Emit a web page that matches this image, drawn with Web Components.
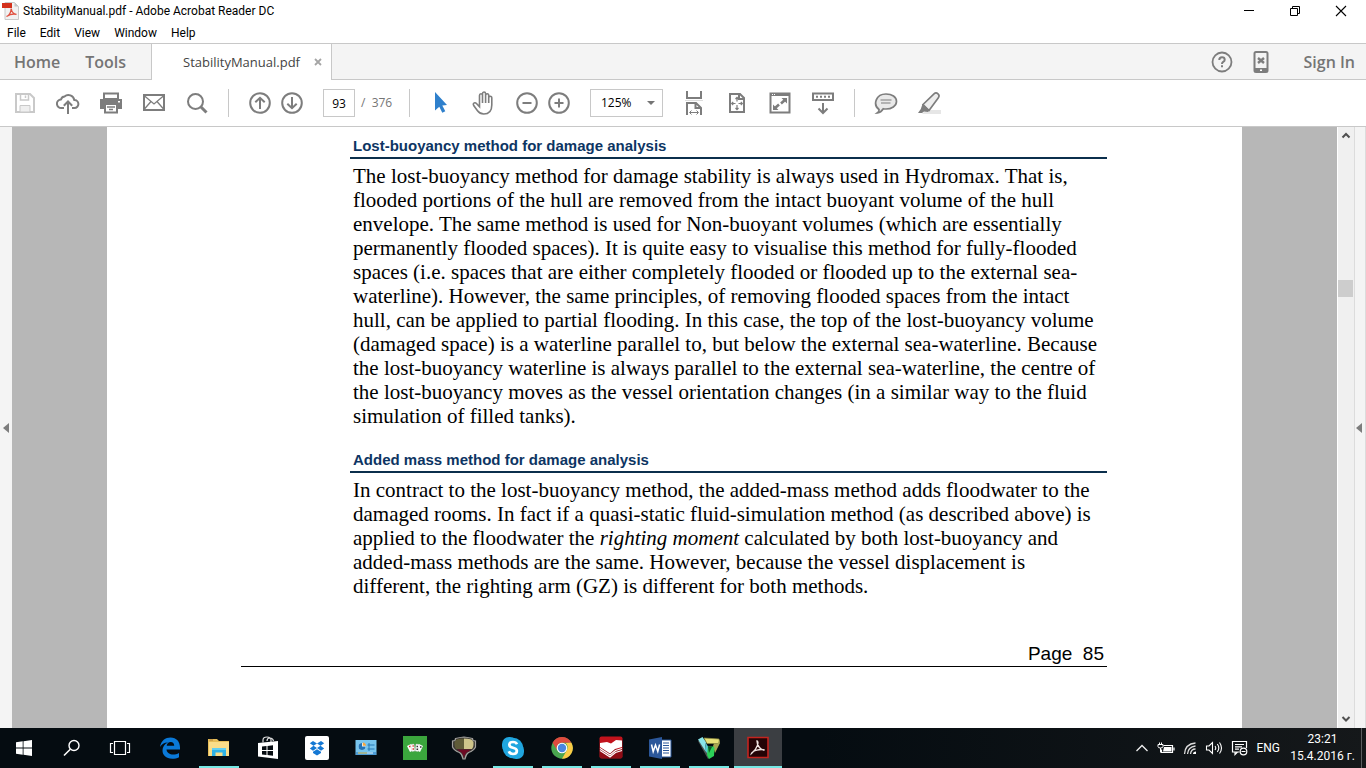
<!DOCTYPE html>
<html lang="en">
<head>
<meta charset="utf-8">
<title>StabilityManual.pdf - Adobe Acrobat Reader DC</title>
<style>
html, body { margin: 0; height: 100%; }
body { font-family: "Noto Sans", "Open Sans", sans-serif; background: #fff; color: #000; overflow: hidden; }
</style>
</head>
<body>
<reader-app></reader-app>

<script>
const g = 'fill="none" stroke="#7d7d7d" stroke-width="2"';
const ICONS = {
  pdf: [18, 18, `<path d="M3 .5h9.500l4 4v13H3z" fill="#f1f1f1" stroke="#c9c9c9"/><path d="M12.500.5l4 4h-4z" fill="#c4c4c4"/><path d="M0 1h10v5H0z" fill="#d3311c"/><path d="M4.500 14.500c2.500-1 4.500-4.500 4.700-8 .5 3.500 2 5.500 5.300 5.800-3.500-.8-7 .2-10 2.200z" fill="none" stroke="#e0503f" stroke-width="1.300"/>`],
  min: [12, 12, `<path d="M1 5.500h10" stroke="#000"/>`],
  restore: [12, 12, `<path d="M1.500 3.500h7v7h-7zM3.500 3.500v-2h7v7h-2" fill="none" stroke="#000"/>`],
  close: [12, 12, `<path d="M1 1l10 10M11 1L1 11" stroke="#000" stroke-width="1.100"/>`],
  tabclose: [9, 9, `<path d="M1 1l6 6M7 1L1 7" stroke="#a5a5a5" stroke-width="1.800"/>`],
  help: [22, 22, `<circle cx="11" cy="11" r="9.500" fill="none" stroke="#7d7d7d" stroke-width="1.800"/><path d="M8.300 9q0-2.700 2.700-2.700T13.700 8.700q0 1.300-1.500 2.200-1.200.8-1.200 2" fill="none" stroke="#7d7d7d" stroke-width="2"/><path d="M10 14.300h2v2h-2z" fill="#7d7d7d"/>`],
  phone: [16, 22, `<rect x="1.500" y="1" width="13" height="20" rx="1.500" fill="#f4f4f4" stroke="#7d7d7d" stroke-width="2"/><path d="M1 17h14v4H1z" fill="#7d7d7d"/><path d="M7 18.500h2v1.500H7z" fill="#fff"/><path d="M5 7l6 5M11 7l-6 5" stroke="#7d7d7d" stroke-width="2.400"/>`],
  save: [22, 22, `<path d="M2 2h14l4 4v14H2z" fill="none" stroke="#c9c9c9" stroke-width="2"/><path d="M6 13.500h10V20H6z" fill="#efefef" stroke="#c9c9c9"/><path d="M6.500 2v6h8V2" fill="none" stroke="#c9c9c9" stroke-width="1.500"/><path d="M11.500 3.500V6" stroke="#c9c9c9" stroke-width="1.500"/>`],
  cloud: [24, 24, `<path d="M8 17H5.500a4.300 4.300 0 0 1-.5-8.600A4 4 0 0 1 8.500 5.500 6 6 0 0 1 18.300 9 4 4 0 0 1 18.500 17H16" ${g}/><path d="M12 23V11M7.800 14.800L12 10.500l4.200 4.300" ${g}/>`],
  print: [24, 24, `<path d="M5 2.500h14V8H5z" fill="none" stroke="#7d7d7d" stroke-width="2"/><path d="M1 8h22v10H1z" fill="#7d7d7d"/><path d="M6 13h12v8.500H6z" fill="#fff" stroke="#7d7d7d" stroke-width="2"/><path d="M8 16h8M10 18.500h4" stroke="#7d7d7d" stroke-width="1.300"/><path d="M19 10h2v1.500h-2z" fill="#fff"/>`],
  mail: [24, 20, `<path d="M2 2h20v15H2z" ${g}/><path d="M2 2.500l10 8.500 10-8.500M2 16.500l7-8M22 16.500l-7-8" fill="none" stroke="#7d7d7d" stroke-width="1.300"/>`],
  search: [22, 22, `<circle cx="9.500" cy="9.500" r="7.500" ${g}/><path d="M15 15l5.500 5.500" stroke="#7d7d7d" stroke-width="3"/>`],
  up: [24, 24, `<circle cx="12" cy="12" r="9.800" ${g}/><path d="M12 18V7M7.300 11.300L12 6.800l4.700 4.500" ${g}/>`],
  down: [24, 24, `<circle cx="12" cy="12" r="9.800" ${g}/><path d="M12 6v11M7.300 12.700l4.700 4.500 4.700-4.500" ${g}/>`],
  cursor: [12, 22, `<path d="M0 0v18.500l4.300-3.800 3 6 3-1.500-3-5.700L12 13z" fill="#2f80cc"/>`],
  hand: [26, 26, `<path d="M8.500 14V5.500q0-1.700 1.500-1.700t1.500 1.700V3.700Q11.500 2 13 2t1.600 1.700v1.600q.2-1.500 1.600-1.500 1.500 0 1.500 1.800v2q.3-1.300 1.600-1.300 1.500 0 1.500 1.900V15q0 9-8 9-4 0-6.300-3.200L2.700 15.500q-1-1.900.5-2.600 1.300-.5 2.500.8l2.800 3V12M11.500 5.500V13M14.600 5v8M17.700 7v6" fill="none" stroke="#7d7d7d" stroke-width="1.600"/>`],
  minus: [24, 24, `<circle cx="12" cy="12" r="9.800" ${g}/><path d="M7.500 12h9" ${g}/>`],
  plus: [24, 24, `<circle cx="12" cy="12" r="9.800" ${g}/><path d="M7.500 12h9M12 7.500v9" ${g}/>`],
  fitwidth: [18, 24, `<path d="M2 0v7h14V0" ${g}/><path d="M0 9.500h18" stroke="#ddd"/><path d="M2 24V12h9l5 5v7M10.500 12.500V17H16" fill="none" stroke="#7d7d7d" stroke-width="2"/><path d="M5 21.500h8M6.500 19.500l-2 2 2 2M11.500 19.500l2 2-2 2" fill="none" stroke="#7d7d7d"/>`],
  fitpage: [18, 22, `<path d="M2 2h10l4 4v14H2zM11 2v5h5" fill="none" stroke="#7d7d7d" stroke-width="2"/><path d="M9 5.500v4M9 13v4.500M3.500 11.500h4M10.500 11.500h4M7.500 7L9 5.300 10.500 7M7.500 16L9 17.700l1.500-1.700M5.200 10l-1.500 1.500L5.200 13M12.800 10l1.500 1.500-1.500 1.500" fill="none" stroke="#7d7d7d" stroke-width="1.200"/>`],
  full: [22, 22, `<path d="M1.500 1.500h19v19h-19z" fill="none" stroke="#7d7d7d" stroke-width="2"/><path d="M1 1h20v3H1z" fill="#7d7d7d"/><path d="M3 2.500h1M5 2.500h1" stroke="#fff"/><path d="M12.500 6H18v5.500zM4 12.500V18h5.500z" fill="#7d7d7d"/><path d="M16.500 7.500L12 11.500M5.500 16.500l4.500-4" stroke="#7d7d7d" stroke-width="2.600"/>`],
  keyboard: [24, 24, `<path d="M2 2.500h20V9H2z" ${g}/><path d="M5 5.800h14" stroke="#7d7d7d" stroke-width="2" stroke-dasharray="2 2"/><path d="M12 12v10M7.500 17.500L12 22l4.500-4.500" ${g}/>`],
  comment: [24, 24, `<path d="M5 18.500C-1.500 13.500 2 3 12 3c6 0 10.500 3 10.500 7.500S17.500 18 12 18c-1 0-2-.1-2.700-.3Q7 21.500 3.500 21.800 5.300 20.500 5 18.500z" fill="#e9e9e9" stroke="#7d7d7d" stroke-width="1.700"/><path d="M6.500 9h11M7 12h9.500" stroke="#7d7d7d" stroke-width="1.200"/>`],
  marker: [24, 24, `<path d="M9 19h15v4H5z" fill="#e6e6e6"/><path d="M6 13.500L17 2.800q2-1.800 4 0t.2 4.200L12 19.500z" fill="#eee" stroke="#7d7d7d" stroke-width="1.700"/><path d="M5.500 13l7 6-1.500 2-4-.5L5 22H1l2.800-4z" fill="#7d7d7d"/>`],
  left: [6, 10, `<path d="M6 0v10L0 5z" fill="#7d7d7d"/>`],
  chup: [10, 8, `<path d="M1.500 5.500L5 2l3.500 3.500" fill="none" stroke="#505050" stroke-width="2"/>`],
  chdown: [10, 8, `<path d="M1.500 2L5 5.500 8.500 2" fill="none" stroke="#505050" stroke-width="2"/>`],
  win: [16, 16, `<path d="M0 2.300L6.700 1.300v6.200H0zM7.500 1.200L16 0v7.500H7.500zM0 8.400h6.700v6.300L0 13.700zM7.500 8.400H16V16l-8.500-1.200z" fill="#fff"/>`],
  tsearch: [18, 18, `<circle cx="11" cy="6.500" r="5" fill="none" stroke="#fff" stroke-width="1.400"/><path d="M7.300 10.200L1 16.500" stroke="#fff" stroke-width="1.600"/>`],
  taskview: [22, 16, `<path d="M5.500 1.500h11v13h-11zM4 3.500H1.500v9H4M18 3.500h2.500v9H18" fill="none" stroke="#fff" stroke-width="1.200"/>`],
  edge: [22, 22, `<path d="M1 10C2 3.500 6.500.5 11.500.5 17.500.5 21 4.800 21 10.500v2H7.500c.3 3.500 3.500 5 6.500 5 2.200 0 4.200-.6 6-1.600v4.300c-2 1-4.300 1.500-6.800 1.500C7 21.700 3.500 18 3.500 13.500c0-3.700 2-6.500 5.500-8C5 5.500 2.500 7.500 1 10zM7.700 8.800h7.500c0-2.300-1.300-3.700-3.500-3.700-2.200 0-3.700 1.500-4 3.700z" fill="#0a79d8"/>`],
  folder: [22, 20, `<path d="M0 1h9l2 2h10v15H0z" fill="#e6bd59"/><path d="M1 4h20v14H1z" fill="#fadd8a"/><path d="M1.500 2H5" stroke="#b5813d"/><path d="M4 18v-8h14v8h-3.500v-3.500h-7V18z" fill="#2fb3e6"/><path d="M4 10h14v2H4z" fill="#62cff2"/>`],
  store: [22, 24, `<path d="M1 7l20-2v18L1 20.500z" fill="#fff"/><path d="M6 6.500V4q0-3 4-3t4 3v2M10 5q0-3 3-3t3.500 3" fill="none" stroke="#ddd" stroke-width="1.200"/><path d="M5 10.500l4.500-.5v4H5zM10.500 9.900l5.500-.6V14h-5.500zM5 15h4.500v4L5 18.500zM10.500 15H16v4.800l-5.500-.7z" fill="#060c11"/>`],
  dropbox: [24, 24, `<rect width="24" height="24" rx="2" fill="#fff"/><path d="M8 5L4.800 7.300 8.500 9.800 12 7.500zM16 5l3.200 2.300-3.700 2.500L12 7.500zM8.500 9.800L4.800 12.500 8 14.800l4-2.700zM15.500 9.800l3.700 2.700-3.200 2.300-4-2.700zM12 13.200l-4 2.600v1.200l4 2.500 4-2.500v-1.200z" fill="#1478d4"/>`],
  panel: [22, 18, `<rect x=".5" y="1" width="21" height="15" fill="#78c5ee"/><path d="M1 13h20v3H1z" fill="#4f9dd6"/><circle cx="7" cy="7.500" r="3.500" fill="#eef8ff"/><path d="M7 7.500V4a3.500 3.500 0 0 0 0 7 3.500 3.500 0 0 0 3.500-3.500z" fill="#2374b7"/><path d="M7.800 6.800V3.500q3 .3 3.300 3.300z" fill="#f6a43a"/><path d="M12.500 6h7M12.500 10h7M14 4v8" stroke="#267bb7"/><path d="M3 14h9" stroke="#f3cc55"/><path d="M12 14h6" stroke="#e5f5fc"/>`],
  cards: [24, 24, `<path d="M0 0h24v24H0z" fill="#3ba63d"/><path d="M4 10l4-2 3 6-4 2zM20 10l-4-2-3 6 4 2z" fill="#fff"/><path d="M7.500 8.500L11 8l1 7-3 .5zM16.500 8.500L13 8l-1 7 3 .5z" fill="#fff" stroke="#bbb" stroke-width=".4"/><path d="M6 10.500h1.500M9.500 10h1.300M9.500 13h1.500" stroke="#d33" stroke-width="1.500"/><path d="M13.500 10.500H15M17 11h1.500M13.500 13.200H15" stroke="#333" stroke-width="1.500"/>`],
  hull: [26, 24, `<path d="M4.500 2.500Q8 1.500 13 1q5 .5 8.500 1.500l.5 2 2.500.5v6q-1.500 3.500-7 5.500-3 2-3.500 6.500h-2q-.5-4.500-3.500-6.500-5.500-2-7-5.500V5L4 4.500z" fill="#3a3834" stroke="#a3a19e" stroke-width="1.200"/><path d="M3.500 6l2-2.500Q9 2.500 13 2.500V13H5Q3.500 11 3.500 9z" fill="#5f5b38"/><path d="M13 2.500q4 0 7.500 1l2 2.500v3q0 2-1.500 4h-8z" fill="#cfc58b"/><path d="M6 13.500h14q-2 2.200-4.500 3-1.500 1.700-2.500 5.500-1-3.800-2.500-5.500-2.500-.8-4.500-3z" fill="#6c0923"/>`],
  skype: [24, 24, `<rect x="1" y="1" width="15" height="16" rx="7" fill="#20a6df"/><rect x="8" y="7" width="15" height="16" rx="7" fill="#20a6df"/><circle cx="12" cy="12" r="10.200" fill="#20a6df"/><path d="M16 8.200Q15 6 12 6 8.300 6 8.300 8.800q0 2.200 3.700 3t3.900 3Q15.900 18 12 18 8.700 18 7.800 15.300" fill="none" stroke="#fff" stroke-width="2.700"/>`],
  chrome: [24, 24, `<circle cx="12" cy="12" r="10.700" fill="#4aa64f"/><path d="M2.600 6.700a10.700 10.700 0 0 1 18.800 0H12a5.400 5.400 0 0 0-5 7.200z" fill="#de4b3e"/><path d="M21.400 6.700A10.700 10.700 0 0 1 12 22.700L16.700 14.500A5.400 5.400 0 0 0 15.500 7z" fill="#fbcb46"/><circle cx="12" cy="12" r="5.300" fill="#fff"/><circle cx="12" cy="12" r="4.200" fill="#4a86e0"/>`],
  reader: [24, 24, `<rect x=".5" y=".5" width="23" height="22" rx="2" fill="#c2131c"/><path d="M1 13h22v9H1z" fill="#8f0c15"/><path d="M1 7l7-1 4 1.500L17 4l6 .5V11l-7 2-5 4.500L1 11z" fill="#fff"/><path d="M1 12.500L11 19l5.500-4.500 6.500-2M1 14.500L11 21l5.500-4.500 6.500-2" fill="none" stroke="#fff" stroke-width="1.100"/>`],
  word: [24, 24, `<path d="M13 4h10v17H13z" fill="#fff" stroke="#2b579a"/><path d="M15 7h6M15 9.500h6M15 12h6M15 14.500h6M15 17h6" stroke="#2b579a"/><path d="M1 3.500L14 1v22L1 20.500z" fill="#2b579a"/><path d="M3.500 8.500L5.200 15.500 7.500 9l2.300 6.500 1.800-7" fill="none" stroke="#fff" stroke-width="1.500"/>`],
  vee: [24, 24, `<path d="M1 5l5 1 7 15-2 2z" fill="#4d5552"/><path d="M1 3.500L5.500 1 9 6 8 14.500z" fill="#8ae6ea"/><path d="M8 14.500L9 7l4 7-1.500 5z" fill="#55c9cf"/><path d="M7 2l15 1 .5 4.500H10z" fill="#e8e27a" stroke="#8c893c" stroke-width=".7"/><path d="M22.500 4v4L18 17l-2-7 1-2.500h3.500z" fill="#a9a653"/><path d="M11 10.500h5.500L17.500 12 17 20l-5 3-2-4z" fill="#2bd158"/><path d="M11 10.500l4 .5-3 6z" fill="#0e5c2a"/>`],
  acrobat: [24, 24, `<path d="M2 1.500h20v20H2z" fill="#240406" stroke="#c4241f" stroke-width="1.600"/><path d="M5.500 17.500c1-3 9-5 13-3.500-3.500.5-7.500-4-7.500-9 2 0 1 7.500-5.500 12.500z" fill="none" stroke="#f1e4e1" stroke-width="1.400"/>`],
  tchev: [14, 10, `<path d="M1.500 8L7 2.500 12.500 8" fill="none" stroke="#eee" stroke-width="1.300"/>`],
  battery: [18, 14, `<path d="M6.500 4.500h9v7h-11v-3M17 6.500v3" fill="none" stroke="#fff" stroke-width="1.200"/><path d="M7 6h7.500v4.500H6z" fill="#fff"/><path d="M1 3.500h5v2q0 1.500-2.500 1.500T1 5.500zM2.500 1.500v2M4.500 1.500v2M3.500 7v4.500" fill="none" stroke="#fff"/>`],
  wifi: [14, 14, `<path d="M1.500 13Q2 3 12.500 2M4.500 13Q5 6 12.500 5M7.500 13q.5-5 5-5" fill="none" stroke="#ddd" stroke-width="1.300"/><path d="M10 13q0-2.500 3-2.500V13z" fill="#fff"/>`],
  volume: [18, 14, `<path d="M1.500 5H4l3.500-3.500v11L4 9H1.500zM10 5q1.500 2 0 4M12.300 3q3 4 0 8M14.500 1.500q4 5.500 0 11" fill="none" stroke="#fff" stroke-width="1.100"/>`],
  notify: [17, 16, `<path d="M8.500 12H1.500V1.500h14V8M4 4.500h9M4 6.800h7M4 9.200h4M4 12v2.500L6.500 12" fill="none" stroke="#fff" stroke-width="1.200"/><circle cx="12.500" cy="11.500" r="3.300" fill="none" stroke="#fff" stroke-width="1.200"/><path d="M10.500 11.500h4" stroke="#fff"/>`]
};

function define(name, html) {
  const t = document.createElement('template');
  customElements.define(name, class extends HTMLElement {
    constructor() {
      super();
      t.innerHTML = typeof html === 'function' ? html(this) : html;
      this.attachShadow({ mode: 'open' }).append(t.content.cloneNode(true));
    }
  });
}

define('ui-icon', el => {
  const [w, h, body] = ICONS[el.getAttribute('name')];
  return `<style>:host{display:block;flex:none;line-height:0}svg{display:block}</style>
    <svg width="${w}" height="${h}" viewBox="0 0 ${w} ${h}" aria-hidden="true">${body}</svg>`;
});

define('icon-button', el => `
  <style>
    :host { display: block; flex: none; width: 28px; height: 28px; }
    button { display: flex; align-items: center; justify-content: center; width: 100%; height: 100%; padding: 0; border: 0; background: none; }
  </style>
  <button type="button" aria-label="${el.getAttribute('label')}"><ui-icon name="${el.getAttribute('icon')}"></ui-icon></button>`);

define('window-title', `
  <style>
    :host { display: flex; align-items: center; height: 22px; padding-left: 2px; }
    .name { flex: 1; display: flex; align-items: center; gap: 3px; font: 12px/16px Roboto, sans-serif; }
    .buttons { display: flex; gap: 18px; padding-right: 11px; }
  </style>
  <div class="name"><ui-icon name="pdf"></ui-icon><slot></slot></div>
  <div class="buttons">
    <icon-button icon="min" label="Minimize"></icon-button>
    <icon-button icon="restore" label="Restore"></icon-button>
    <icon-button icon="close" label="Close"></icon-button>
  </div>`);

define('menu-bar', `
  <style>
    :host { display: block; height: 21px; }
    nav { display: flex; gap: 14px; padding: 2px 7px; }
    button { border: 0; padding: 0; background: none; font: 12px/18px Roboto, sans-serif; color: #000; }
  </style>
  <nav><button>File</button><button>Edit</button><button>View</button><button>Window</button><button>Help</button></nav>`);

define('tab-strip', `
  <style>
    :host { display: flex; height: 37px; box-sizing: border-box; background: #f4f4f4; border-top: 1px solid #c8c8c8; color: #757575; }
    .part { display: flex; align-items: center; box-sizing: border-box; border-bottom: 1px solid #c8c8c8; }
    .views { width: 151px; gap: 25px; padding-left: 14px; }
    .doc { width: 181px; background: #fff; border: 1px solid #c8c8c8; border-width: 0 1px; padding-left: 31px; gap: 14px; }
    .right { flex: 1; justify-content: flex-end; gap: 11px; padding-right: 11px; }
    .right button { margin-left: 18px; }
    button { border: 0; padding: 0; background: none; color: inherit; font: 600 16px/20px "Open Sans", sans-serif; }
    .doc .title { font-weight: 400; font-size: 13px; color: #444; }
  </style>
  <div class="part views"><button>Home</button><button>Tools</button></div>
  <div class="part doc"><button class="title">StabilityManual.pdf</button><button aria-label="Close tab"><ui-icon name="tabclose"></ui-icon></button></div>
  <div class="part right"><icon-button icon="help" label="Help"></icon-button><icon-button icon="phone" label="Mobile link"></icon-button><button>Sign In</button></div>`);

define('tool-bar', `
  <style>
    :host { display: flex; align-items: center; height: 47px; box-sizing: border-box; border-bottom: 1px solid #c8c8c8; padding-left: 11px; gap: 17px; font: 12px/16px "Open Sans", sans-serif; }
    .group { display: flex; align-items: center; gap: 15px; }
    .pair { display: flex; gap: 4px; }
    .page { display: flex; align-items: center; gap: 6px; color: #757575; width: 69px; white-space: pre; }
    hr { width: 1px; height: 28px; margin: 0; border: 0; background: #c8c8c8; flex: none; }
    input { width: 32px; height: 28px; box-sizing: border-box; border: 1px solid #c8c8c8; padding: 0; text-align: center; font: inherit; color: #000; }
    .zoom { position: relative; width: 73px; height: 28px; }
    select { appearance: none; width: 100%; height: 100%; box-sizing: border-box; border: 1px solid #c8c8c8; border-radius: 0; background: #fff; padding: 0 10px; font: inherit; color: #000; }
    .zoom::after { content: ""; position: absolute; right: 8px; top: 12px; border: 4px solid transparent; border-top-color: #757575; border-bottom: 0; pointer-events: none; }
  </style>
  <div class="group">
    <icon-button icon="save" label="Save"></icon-button>
    <icon-button icon="cloud" label="Upload"></icon-button>
    <icon-button icon="print" label="Print"></icon-button>
    <icon-button icon="mail" label="Email"></icon-button>
    <icon-button icon="search" label="Find"></icon-button>
  </div>
  <hr>
  <div class="pair">
    <icon-button icon="up" label="Previous page"></icon-button>
    <icon-button icon="down" label="Next page"></icon-button>
  </div>
  <div class="page"><input aria-label="Page number" value="93"><span>/  376</span></div>
  <hr>
  <div class="group">
    <icon-button icon="cursor" label="Select"></icon-button>
    <icon-button icon="hand" label="Pan"></icon-button>
    <div class="pair">
      <icon-button icon="minus" label="Zoom out"></icon-button>
      <icon-button icon="plus" label="Zoom in"></icon-button>
    </div>
  </div>
  <div class="zoom"><select aria-label="Zoom level"><option>125%</option></select></div>
  <div class="group">
    <icon-button icon="fitwidth" label="Fit width"></icon-button>
    <icon-button icon="fitpage" label="Fit page"></icon-button>
    <icon-button icon="full" label="Full screen"></icon-button>
    <icon-button icon="keyboard" label="Read mode"></icon-button>
  </div>
  <hr>
  <div class="group">
    <icon-button icon="comment" label="Comment"></icon-button>
    <icon-button icon="marker" label="Highlight"></icon-button>
  </div>`);

define('side-handle', `
  <style>
    :host { display: flex; align-items: center; justify-content: flex-end; box-sizing: border-box; flex: none; width: 12px; background: #f4f4f4; padding-right: 3px; }
    button { border: 0; padding: 0; background: none; }
  </style>
  <button aria-label="Toggle pane"><ui-icon name="left"></ui-icon></button>`);

define('scroll-bar', `
  <style>
    :host { display: flex; flex-direction: column; align-items: center; flex: none; width: 17px; box-sizing: border-box; background: #f0f0f0; border-left: 1px solid #fff; }
    button { border: 0; padding: 5px 0; background: none; height: 18px; }
    .track { flex: 1; width: 100%; display: flex; flex-direction: column; }
    .before { flex: 135; } .after { flex: 414; }
    .thumb { height: 17px; background: #cdcdcd; margin-right: 1px; }
  </style>
  <button aria-label="Scroll up"><ui-icon name="chup"></ui-icon></button>
  <div class="track"><div class="before"></div><div class="thumb"></div><div class="after"></div></div>
  <button aria-label="Scroll down"><ui-icon name="chdown"></ui-icon></button>`);

define('manual-section', `
  <style>
    :host { display: block; margin-left: 109px; margin-bottom: 23px; }
    h2 { margin: 0 0 5px; padding: 0 3px 2px; border-bottom: 2px solid #0b2f4c; font: bold 15px/18px "Liberation Sans", Arial, sans-serif; color: #0d3563; }
    p { margin: 0; padding-left: 3px; font: 21px/24px "Liberation Serif", "Times New Roman", serif; color: #000; }
    p ::slotted(span) { display: block; }
  </style>
  <h2><slot name="heading"></slot></h2>
  <p><slot></slot></p>`);

define('pdf-page', `
  <style>
    :host { display: block; flex: 0 1 1135px; box-sizing: border-box; background: #fff; padding: 10px 135px 0 134px; }
    footer { margin-top: 44px; padding: 0 3px 0 0; border-bottom: 1px solid #000; text-align: right; white-space: pre; font: 19px/24px "Liberation Sans", Arial, sans-serif; }
  </style>
  <manual-section>
    <b slot="heading">Lost-buoyancy method for damage analysis</b>
    <span>The lost-buoyancy method for damage stability is always used in Hydromax. That is,</span>
    <span>flooded portions of the hull are removed from the intact buoyant volume of the hull</span>
    <span>envelope. The same method is used for Non-buoyant volumes (which are essentially</span>
    <span>permanently flooded spaces). It is quite easy to visualise this method for fully-flooded</span>
    <span>spaces (i.e. spaces that are either completely flooded or flooded up to the external sea-</span>
    <span>waterline). However, the same principles, of removing flooded spaces from the intact</span>
    <span>hull, can be applied to partial flooding. In this case, the top of the lost-buoyancy volume</span>
    <span>(damaged space) is a waterline parallel to, but below the external sea-waterline. Because</span>
    <span>the lost-buoyancy waterline is always parallel to the external sea-waterline, the centre of</span>
    <span>the lost-buoyancy moves as the vessel orientation changes (in a similar way to the fluid</span>
    <span>simulation of filled tanks).</span>
  </manual-section>
  <manual-section>
    <b slot="heading">Added mass method for damage analysis</b>
    <span>In contract to the lost-buoyancy method, the added-mass method adds floodwater to the</span>
    <span>damaged rooms. In fact if a quasi-static fluid-simulation method (as described above) is</span>
    <span>applied to the floodwater the <i>righting moment</i> calculated by both lost-buoyancy and</span>
    <span>added-mass methods are the same. However, because the vessel displacement is</span>
    <span>different, the righting arm (GZ) is different for both methods.</span>
  </manual-section>
  <footer>Page  85</footer>`);

define('document-view', `
  <style>
    :host { display: flex; flex: 1; min-height: 0; overflow: hidden; }
    .canvas { flex: 1; min-width: 0; display: flex; justify-content: center; background: #b7b7b7; }
    .right { border-left: 1px solid #dcdcdc; border-right: 1px solid #dcdcdc; }
  </style>
  <side-handle></side-handle>
  <div class="canvas"><pdf-page></pdf-page></div>
  <scroll-bar></scroll-bar>
  <side-handle class="right"></side-handle>`);

define('task-button', el => `
  <style>
    :host { display: block; flex: none; width: 48px; height: 40px; }
    :host([active]) { background: #3b3e42; }
    button { position: relative; display: flex; align-items: center; justify-content: center; width: 100%; height: 100%; padding: 0; border: 0; background: none; }
    :host([running]) button::after { content: ""; position: absolute; left: 4px; right: 4px; bottom: 0; height: 2px; background: #76e8e4; }
    :host([active]) button::after { left: 0; right: 0; }
  </style>
  <button type="button" aria-label="${el.getAttribute('label')}"><ui-icon name="${el.getAttribute('icon')}"></ui-icon></button>`);

define('task-bar', `
  <style>
    :host { display: flex; justify-content: space-between; height: 40px; flex: none; background: linear-gradient(90deg, #050c11 60%, #15181a); color: #fff; font: 12px/17px Roboto, sans-serif; }
    .system, .apps, .tray { display: flex; }
    .apps { gap: 1px; margin-left: 2px; margin-right: auto; }
    .tray { align-items: center; gap: 8px; }
    .clock { text-align: center; width: 73px; box-sizing: border-box; padding-right: 4px; }
    .show { width: 4px; height: 100%; border-left: 1px solid #5b5e60; margin-left: -8px; }
  </style>
  <div class="system">
    <task-button icon="win" label="Start"></task-button>
    <task-button icon="tsearch" label="Search"></task-button>
    <task-button icon="taskview" label="Task view"></task-button>
  </div>
  <div class="apps">
    <task-button icon="edge" label="Edge"></task-button>
    <task-button icon="folder" label="File Explorer" running></task-button>
    <task-button icon="store" label="Store"></task-button>
    <task-button icon="dropbox" label="Dropbox"></task-button>
    <task-button icon="panel" label="Control Panel"></task-button>
    <task-button icon="cards" label="Solitaire"></task-button>
    <task-button icon="hull" label="Hull modeller"></task-button>
    <task-button icon="skype" label="Skype" running></task-button>
    <task-button icon="chrome" label="Chrome" running></task-button>
    <task-button icon="reader" label="Dictionary" running></task-button>
    <task-button icon="word" label="Word" running></task-button>
    <task-button icon="vee" label="Stability" running></task-button>
    <task-button icon="acrobat" label="Acrobat Reader" running active></task-button>
  </div>
  <div class="tray">
    <ui-icon name="tchev"></ui-icon>
    <ui-icon name="battery"></ui-icon>
    <ui-icon name="wifi"></ui-icon>
    <ui-icon name="volume"></ui-icon>
    <ui-icon name="notify"></ui-icon>
    <span>ENG</span>
    <time class="clock">23:21<br>15.4.2016 г.</time>
    <div class="show"></div>
  </div>`);

define('reader-app', `
  <style>:host { display: flex; flex-direction: column; height: 100vh; }
  window-title, menu-bar, tab-strip, tool-bar { flex: none; }</style>
  <window-title>StabilityManual.pdf - Adobe Acrobat Reader DC</window-title>
  <menu-bar></menu-bar>
  <tab-strip></tab-strip>
  <tool-bar></tool-bar>
  <document-view></document-view>
  <task-bar></task-bar>`);
</script>
</body>
</html>
